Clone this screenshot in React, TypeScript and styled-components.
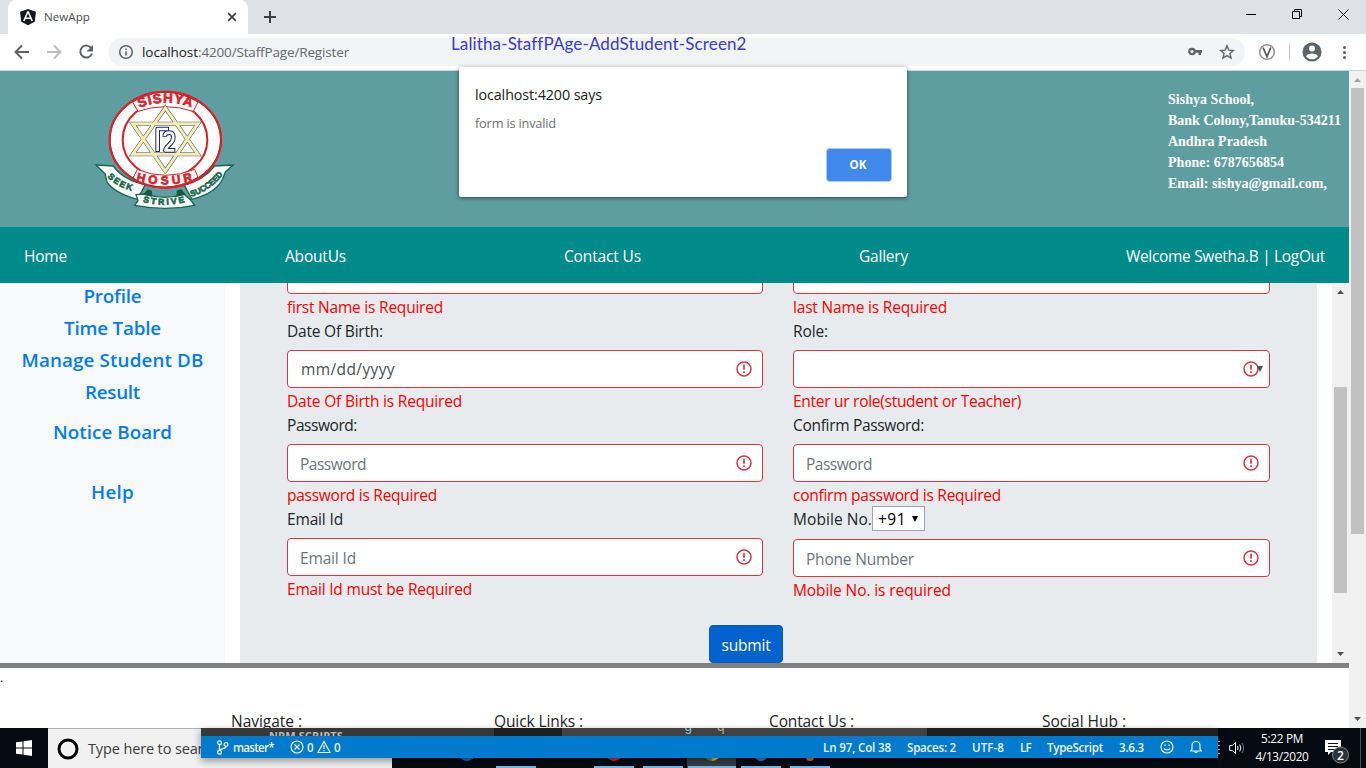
import React, { useLayoutEffect, useRef, useState } from "react";
import styled, { createGlobalStyle, css } from "styled-components";

const ui = `"Open Sans", "Noto Sans", sans-serif`;

const Global = createGlobalStyle`
  *, *::before, *::after { box-sizing: border-box; }
  body { margin: 0; background: #fff; overflow: hidden; font-family: ${ui}; color: #212529; }
`;

/* Text tracked so that it spans a given advance width. */
const Run = styled.span<{ $w: number }>`
  display: inline-block;
  flex: none;
  width: ${(p) => p.$w}px;
  white-space: nowrap;
`;
function Fit({ w, children }: { w: number; children: string }) {
  const inner = useRef<HTMLSpanElement>(null);
  const [spacing, setSpacing] = useState(0);
  useLayoutEffect(() => {
    if (inner.current) {
      setSpacing((w - inner.current.getBoundingClientRect().width) / children.length);
    }
  }, [w, children]);
  return (
    <Run $w={w}>
      <span ref={inner} style={{ letterSpacing: spacing }}>{children}</span>
    </Run>
  );
}

const Screen = styled.div`
  position: relative;
  width: 1366px;
  height: 768px;
  overflow: hidden;
  display: flex;
  flex-direction: column;
`;

/* ---------- browser frame ---------- */
const TabStrip = styled.div`
  height: 34px;
  background: #dee1e6;
  display: flex;
  padding-left: 8px;
  align-items: stretch;
`;
const Tab = styled.div`
  width: 240px;
  background: #fff;
  border-radius: 8px 8px 0 0;
  display: flex;
  align-items: center;
  padding: 0 11px 0 11px;
  font-size: 11.6px;
  color: #4a4d51;
  svg:last-child { margin-left: auto; }
  ${Run} { margin-left: 7px; margin-top: -2px; }
`;
const NewTab = styled.div`
  width: 44px;
  display: flex;
  align-items: center;
  justify-content: center;
`;
const WindowButtons = styled.div`
  margin-left: auto;
  display: flex;
  padding-bottom: 6px;
`;
const WindowButton = styled.div`
  width: 46px;
  display: flex;
  align-items: center;
  justify-content: center;
`;
const Toolbar = styled.div`
  height: 37px;
  background: #fff;
  border-bottom: 1px solid #d0d3d6;
  display: flex;
  align-items: center;
`;
const NavIcons = styled.div`
  width: 108px;
  display: flex;
  gap: 12px;
  padding-left: 12px;
`;
const Omnibox = styled.div`
  width: 1137px;
  height: 28px;
  border-radius: 14px;
  background: #f1f3f4;
  display: flex;
  align-items: center;
  padding: 0 10px;
  font-size: 13.5px;
  color: #66696d;
`;
const UrlHost = styled.span`
  color: #202124;
  margin-left: 8px;
`;
const BoxActions = styled.div`
  margin-left: auto;
  display: flex;
  align-items: center;
  gap: 16px;
`;
const Extensions = styled.div`
  flex: 1;
  display: flex;
  align-items: center;
  padding-left: 13px;
`;
const Divider = styled.i`
  width: 1px;
  height: 16px;
  background: #c4c7ca;
  margin: 0 12px 0 13px;
`;
const Dots = styled.div`
  display: grid;
  gap: 2px;
  margin-left: 21px;
  i { width: 3px; height: 3px; border-radius: 50%; background: #5f6368; }
`;

/* ---------- page ---------- */
const Viewport = styled.div`
  height: 657px;
  display: flex;
`;
const Page = styled.div`
  width: 1349px;
  overflow: hidden;
`;
const Banner = styled.header`
  height: 156px;
  background: #5f9ea0;
  display: flex;
  justify-content: space-between;
  padding: 9px 0 0 80px;
`;
const Address = styled.address`
  width: 181px;
  margin-top: 9px;
  font: bold 14px/21px "Liberation Serif", serif;
  color: #fff;
  display: flex;
  flex-direction: column;
`;
const Menu = styled.nav`
  height: 56px;
  background: #008b8b;
  color: #fff;
  font-size: 15.5px;
  display: flex;
  justify-content: space-between;
  align-items: center;
  padding: 2px 24px 0;
`;
const Body = styled.div`
  height: 385px;
  border-bottom: 5px solid #808080;
  display: flex;
`;
const Sidebar = styled.aside`
  width: 225px;
  background: #f8f9fa;
  display: flex;
  flex-direction: column;
  align-items: center;
  overflow: hidden;
  padding-top: 1px;
`;
const SideLink = styled.a<{ $before?: number }>`
  font-size: 18.8px;
  font-weight: 600;
  line-height: 24px;
  margin-bottom: 8px;
  margin-top: ${(p) => p.$before ?? 0}px;
  color: #007bff;
`;
const FormPanel = styled.form`
  width: 1077px;
  margin: 0 15px;
  background: #e7ebee;
  padding: 0 47px;
  overflow: hidden;
  font-size: 15.5px;
  line-height: 24px;
  display: flex;
  flex-direction: column;
  align-items: center;
`;
const Columns = styled.div`
  width: 983px;
  height: 342px;
  flex: none;
  display: grid;
  grid-template-columns: 476px 477px;
  column-gap: 30px;
  line-height: 26px;
`;
const Column = styled.div`
  margin-top: -27px;
`;
const Label = styled.div`
  display: flex;
  height: 24px;
  margin-bottom: 8px;
`;
const PhoneLabel = styled(Label)`
  height: 25px;
  align-items: center;
`;
const CodeSelect = styled.div`
  width: 53px;
  height: 25px;
  background: #fff;
  border: 1px solid #a6a6a6;
  color: #000;
  display: flex;
  align-items: center;
  justify-content: space-between;
  padding: 0 6px 0 5px;
`;
const Field = styled.div<{ $dark?: boolean }>`
  height: 38px;
  background: #fff;
  border: 1px solid #dc3545;
  border-radius: 4px;
  padding: 1px 10px 0 12px;
  color: ${(p) => (p.$dark ? "#495057" : "#6c757d")};
  display: flex;
  align-items: center;
  ${(p) => p.$dark && css`padding: 0 10px 1px 13px;`}
`;
const Marks = styled.div<{ $arrow?: boolean; $low?: boolean }>`
  margin-left: auto;
  margin-top: ${(p) => (p.$low ? 0 : -2)}px;
  display: flex;
  align-items: center;
  ${(p) => p.$arrow && css`margin-right: -4px;`}
  svg + svg { margin-left: -2px; }
`;
const ErrorText = styled.div`
  height: 24px;
  color: #f00;
`;
const Submit = styled.div`
  width: 74px;
  height: 38px;
  flex: none;
  border-radius: 4px;
  background: #0062cc;
  border: 1px solid #005cbf;
  margin-right: 65px;
  padding-top: 1px;
  color: #fff;
  display: flex;
  align-items: center;
  justify-content: center;
`;
const Footer = styled.footer`
  height: 60px;
  padding: 40px 0 0 231px;
  display: grid;
  grid-template-columns: 263px 275px 273px auto;
  font-size: 15.5px;
  line-height: 26px;
  position: relative;
  overflow: hidden;
`;
const Stop = styled.span`
  position: absolute;
  left: 0;
  top: -3px;
  font-size: 12px;
`;

/* ---------- scrollbars ---------- */
const Track = styled.div`
  width: 17px;
  flex: none;
  background: #f1f1f1;
  display: flex;
  flex-direction: column;
  align-items: center;
  justify-content: space-between;
  padding: 7px 0 7px 0;
`;
const Thumb = styled.div<{ $top: number; $h: number }>`
  width: 13px;
  height: ${(p) => p.$h}px;
  margin: ${(p) => p.$top}px 0 auto;
  background: #c1c1c1;
`;
const Tri = ({ down, color = "#505050" }: { down?: boolean; color?: string }) => (
  <svg width="7" height="4" viewBox="0 0 7 4">
    <path d={down ? "M0 0h7L3.5 4z" : "M0 4h7L3.5 0z"} fill={color} />
  </svg>
);

/* ---------- overlays ---------- */
const Caption = styled.div`
  position: absolute;
  left: 451px;
  top: 33px;
  font: 17px/22px Lato, sans-serif;
  color: #3a3bd3;
`;
const Dialog = styled.div`
  position: absolute;
  left: 459px;
  top: 67px;
  width: 448px;
  height: 130px;
  background: #fff;
  border-radius: 2px;
  box-shadow: 0 1px 4px rgba(0, 0, 0, 0.55);
  padding: 17px 16px;
  display: flex;
  flex-direction: column;
`;
const DialogTitle = styled.div`
  font-size: 14.3px;
  line-height: 22px;
  color: #202124;
`;
const DialogText = styled.div`
  margin-top: 8px;
  font-size: 12.8px;
  line-height: 19px;
  color: #6e7074;
`;
const OkButton = styled.div`
  margin: auto 0 -1px auto;
  width: 64px;
  height: 32px;
  border-radius: 3px;
  background: #4088ec;
  box-shadow: 0 0 0 1px #a9cbf8;
  color: #fff;
  font-size: 11.5px;
  font-weight: 700;
  display: flex;
  align-items: center;
  justify-content: center;
  padding: 0 2px 1px 0;
`;

/* ---------- desktop taskbar ---------- */
const Taskbar = styled.div`
  position: relative;
  height: 40px;
  background: #060a12;
  display: flex;
  color: #fff;
`;
const Start = styled.div`
  width: 48px;
  display: flex;
  align-items: center;
  justify-content: center;
`;
const Search = styled.div`
  width: 344px;
  background: #f1f1f1;
  border-top: 1px solid #b0b0b0;
  display: flex;
  align-items: center;
  padding-left: 9px;
  font-size: 14.5px;
  color: #3c3c3c;
  ${Run} { margin-left: 9px; }
`;
const Apps = styled.div`
  display: flex;
  padding-left: 50px;
`;
const TaskApp = styled.div<{ $active?: boolean; $idle?: boolean }>`
  width: 49px;
  display: flex;
  flex-direction: column;
  align-items: center;
  justify-content: flex-end;
  background: ${(p) => (p.$active ? "#3a3e46" : "transparent")};
  border-bottom: 2px solid transparent;
  &::after {
    content: "";
    width: ${(p) => (p.$active ? 48 : 40)}px;
    height: 2px;
    margin-bottom: -2px;
    background: ${(p) => (p.$idle ? "transparent" : "#76b9ed")};
  }
`;
const Glyph = styled.i<{ $c: string; $s: number }>`
  width: ${(p) => p.$s}px;
  height: ${(p) => p.$s}px;
  margin-bottom: 5px;
  border-radius: 50%;
  background: ${(p) => p.$c};
`;
const Tray = styled.div`
  margin-left: auto;
  width: 148px;
  display: flex;
  align-items: center;
`;
const TrayDots = styled.i`
  width: 2px;
  height: 14px;
  margin-right: 9px;
  background: repeating-linear-gradient(#c8c8c8 0 1px, transparent 1px 4px);
`;
const Clock = styled.div`
  width: 74px;
  display: flex;
  flex-direction: column;
  align-items: center;
  font-size: 11.8px;
  line-height: 18px;
  margin-top: -2px;
`;
const Notices = styled.div`
  width: 27px;
  height: 28px;
  margin: 7px 0 0 5px;
`;
const Peek = styled.i`
  width: 1px;
  height: 40px;
  background: #4d5056;
  margin-left: 9px;
`;
const Editor = styled.div`
  position: absolute;
  left: 201px;
  top: 0;
  width: 1017px;
  height: 30px;
  box-shadow: 0 3px 8px rgba(0, 0, 0, 0.4);
`;
const EditorRow = styled.div`
  height: 8px;
  display: flex;
`;
const Pane = styled.div<{ $w: number; $c: string; $pad?: number }>`
  width: ${(p) => p.$w}px;
  height: 8px;
  overflow: hidden;
  background: ${(p) => p.$c};
  padding-left: ${(p) => p.$pad ?? 0}px;
  font-size: 11px;
  font-weight: 700;
  line-height: 0;
  color: #b8b8b8;
`;
const ScriptsPane = styled(Pane)`
  line-height: 16px;
  ${Run} { margin-top: -11px; }
`;
const CodePane = styled(Pane)`
  display: flex;
  font: 14px/0 "Liberation Mono", monospace;
  color: #86b9c9;
  span { margin-top: -1px; }
  span + span { margin-left: 24px; color: #c0a080; }
`;
const Status = styled.div`
  height: 22px;
  background: #007acc;
  display: flex;
  align-items: center;
  padding: 0 16px 0 15px;
  font-size: 11.6px;
  font-weight: 600;
  color: #e8f4fc;
`;
const Left = styled.div`
  display: flex;
  align-items: center;
  margin-right: auto;
`;
const Gap = styled.i<{ $w: number }>`
  width: ${(p) => p.$w}px;
`;
const Right = styled.div`
  display: flex;
  align-items: center;
  gap: 16px;
`;

const Alert = () => (
  <svg width="16" height="16" viewBox="0 0 16 16" fill="none" stroke="#dc3545">
    <circle cx="8" cy="8" r="7" strokeWidth="1.5" />
    <path d="M8 3.8v5" strokeWidth="1.7" />
    <path d="M8 10.3v1.8" strokeWidth="1.7" />
  </svg>
);

const Crest = () => (
  <svg width="170" height="140" viewBox="0 0 510 420">
    <defs>
      <path id="top" d="M178 84 Q256 52 340 84" />
      <path id="bottom" d="M168 302 Q256 326 346 300" />
      <path id="seek" d="M82 291 Q112 322 162 334" />
      <path id="strive" d="M188 366 Q252 384 320 365" />
      <path id="succeed" d="M334 350 Q392 332 432 280" />
    </defs>
    <g fill="#fff" stroke="#17694c" strokeWidth="4">
      <path d="M48 255 L100 258 Q130 300 196 314 L172 358 Q100 338 80 304 L76 282 Z" />
      <path d="M460 255 L404 258 Q370 302 312 314 L336 358 Q410 338 428 296 L436 276 Z" />
      <path d="M196 342 Q256 362 312 342 L332 360 L344 376 Q256 394 164 376 L174 362 L168 344 Z" />
    </g>
    <path d="M204 328 l12 4 v18 l-28 -6z M304 328 l-14 4 v18 l28 -6z" fill="#17593f" />
    <ellipse cx="256" cy="179" rx="167" ry="144" fill="#fff" stroke="#dc2027" strokeWidth="6" />
    <ellipse cx="255" cy="179" rx="127" ry="114" fill="#fff" stroke="#dc2027" strokeWidth="6" />
    <path d="M158 66 L174 94 Q256 66 340 94 L354 66 Q256 8 158 66Z M172 268 L158 296 Q256 348 354 292 L344 268 Q256 304 172 268Z" fill="#fff" stroke="#dc2027" strokeWidth="3" />
    <ellipse cx="256" cy="179" rx="167" ry="144" fill="none" stroke="#dc2027" strokeWidth="6" />
    <g fill="none" strokeLinejoin="miter">
      <path d="M256 84 L354 223 H158Z M256 273 L354 131 H158Z" stroke="#59597a" strokeWidth="12" />
      <path d="M256 84 L354 223 H158Z M256 273 L354 131 H158Z" stroke="#f3edb2" strokeWidth="9" />
    </g>
    <g fill="none" strokeLinejoin="round">
      <path d="M233 216 V147 H267 M254 170 Q254 158 268 158 Q280 158 280 172 Q280 184 268 194 Q258 202 256 211 H286" stroke="#23237f" strokeWidth="14" />
      <path d="M233 213 V147 H264 M254 168 Q254 158 268 158 Q280 158 280 172 Q280 184 268 194 Q258 202 256 211 H283" stroke="#fff" strokeWidth="8" />
    </g>
    <g fontFamily="Liberation Sans, sans-serif" fontWeight="700">
      <g fill="#dc2027" stroke="#dc2027" strokeWidth="2" fontSize="40">
        <text><textPath href="#top" textLength="160">SISHYA</textPath></text>
        <text fontSize="36"><textPath href="#bottom" textLength="172">HOSUR</textPath></text>
      </g>
      <g fill="#17694c" stroke="#17694c" strokeWidth="2" fontSize="26">
        <text><textPath href="#seek" textLength="84">SEEK</textPath></text>
        <text><textPath href="#strive" textLength="128">STRIVE</textPath></text>
        <text fontSize="25"><textPath href="#succeed" textLength="118" lengthAdjust="spacingAndGlyphs">SUCCEED</textPath></text>
      </g>
    </g>
  </svg>
);

type Entry = {
  label: [string, number];
  hint?: [string, number];
  error: [string, number];
  kind?: "date" | "select" | "phone";
};
const leftFields: Entry[] = [
  { label: ["Date Of Birth:", 96], hint: ["mm/dd/yyyy", 94], error: ["Date Of Birth is Required", 175], kind: "date" },
  { label: ["Password:", 70], hint: ["Password", 66], error: ["password is Required", 150] },
  { label: ["Email Id", 56], hint: ["Email Id", 56], error: ["Email Id must be Required", 185] },
];
const rightFields: Entry[] = [
  { label: ["Role:", 35], error: ["Enter ur role(student or Teacher)", 228], kind: "select" },
  { label: ["Confirm Password:", 131], hint: ["Password", 66], error: ["confirm password is Required", 208] },
  { label: ["Mobile No.", 79], hint: ["Phone Number", 108], error: ["Mobile No. is required", 158], kind: "phone" },
];

const Entries = ({ first, items }: { first: [string, number]; items: Entry[] }) => (
  <Column>
    <Field />
    <ErrorText><Fit w={first[1]}>{first[0]}</Fit></ErrorText>
    {items.map(({ label, hint, error, kind }) => (
      <React.Fragment key={label[0]}>
        {kind === "phone" ? (
          <PhoneLabel>
            <Fit w={label[1]}>{label[0]}</Fit>
            <CodeSelect>
              <Fit w={28}>+91</Fit>
              <svg width="6" height="6" viewBox="0 0 6 6"><path d="M0 0h6L3 6z" /></svg>
            </CodeSelect>
          </PhoneLabel>
        ) : (
          <Label><Fit w={label[1]}>{label[0]}</Fit></Label>
        )}
        <Field $dark={kind === "date"}>
          {hint && <Fit w={hint[1]}>{hint[0]}</Fit>}
          <Marks $arrow={kind === "select"} $low={kind === "date"}>
            <Alert />
            {kind === "select" && (
              <svg width="6" height="6" viewBox="0 0 6 6"><path d="M0 0h6L3 6z" fill="#495057" /></svg>
            )}
          </Marks>
        </Field>
        <ErrorText><Fit w={error[1]}>{error[0]}</Fit></ErrorText>
      </React.Fragment>
    ))}
  </Column>
);

export default function App() {
  return (
    <Screen>
      <Global />
      <TabStrip>
        <Tab>
          <svg width="18" height="18" viewBox="0 0 18 18">
            <path d="M9 1l8 2.7-1.3 10L9 17.3 2.3 13.7 1 3.7z" fill="#151a24" />
            <path d="M9 3.5L4.8 13M9 3.5L13.2 13M6.3 10.2h5.4" fill="none" stroke="#fff" strokeWidth="1.6" />
          </svg>
          <Fit w={46}>NewApp</Fit>
          <svg width="10" height="10" viewBox="0 0 10 10" stroke="#3c4043" strokeWidth="1.7">
            <path d="M1.2 1.2l7.6 7.6M8.8 1.2L1.2 8.8" />
          </svg>
        </Tab>
        <NewTab>
          <svg width="12" height="12" viewBox="0 0 12 12" stroke="#3c4043" strokeWidth="2"><path d="M6 0v12M0 6h12" /></svg>
        </NewTab>
        <WindowButtons>
          <WindowButton><svg width="10" height="10"><path d="M0 5.5h10" stroke="#000" /></svg></WindowButton>
          <WindowButton>
            <svg width="10" height="10" fill="none" stroke="#000"><path d="M.5 2.5h7v7h-7zM2.5 2.5v-2h7v7h-2" /></svg>
          </WindowButton>
          <WindowButton><svg width="11" height="11" stroke="#000"><path d="M.5.5l10 10M10.5.5l-10 10" /></svg></WindowButton>
        </WindowButtons>
      </TabStrip>
      <Toolbar>
        <NavIcons>
          <svg width="20" height="20" viewBox="0 0 20 20" fill="none" stroke="#5f6368" strokeWidth="2"><path d="M17 10H4M10 3.5L3.5 10l6.5 6.5" /></svg>
          <svg width="20" height="20" viewBox="0 0 20 20" fill="none" stroke="#babcbe" strokeWidth="2"><path d="M3 10h13M10 3.5l6.5 6.5-6.5 6.5" /></svg>
          <svg width="20" height="20" viewBox="0 0 20 20" fill="none" stroke="#5f6368" strokeWidth="2">
            <path d="M15.4 6.4A6 6 0 1 0 16 11.5" />
            <path d="M17 3v6.5h-6.5z" fill="#5f6368" stroke="none" />
          </svg>
        </NavIcons>
        <Omnibox>
          <svg width="16" height="16" viewBox="0 0 16 16" fill="none" stroke="#5f6368" strokeWidth="1.5">
            <circle cx="8" cy="8" r="6.3" /><path d="M8 7.2v4.3M8 4.5v1.5" />
          </svg>
          <UrlHost><Fit w={56}>localhost</Fit></UrlHost>
          <Fit w={151}>:4200/StaffPage/Register</Fit>
          <BoxActions>
            <svg width="16" height="16" viewBox="0 0 16 16">
              <circle cx="5" cy="7.5" r="2.7" fill="none" stroke="#5f6368" strokeWidth="2.3" />
              <path d="M7.5 6.1H15v2.6h-1v2.4h-2.5V8.7h-4z" fill="#5f6368" />
            </svg>
            <svg width="16" height="16" viewBox="0 0 16 16" fill="none" stroke="#5f6368" strokeWidth="1.4">
              <path d="M8 1.8l1.8 4.3 4.6.4-3.5 3 1.1 4.5L8 11.6 4 14l1.1-4.5-3.5-3 4.6-.4z" />
            </svg>
          </BoxActions>
        </Omnibox>
        <Extensions>
          <svg width="18" height="18" viewBox="0 0 18 18" fill="none">
            <circle cx="9" cy="9" r="7.3" stroke="#929292" strokeWidth="1.5" />
            <path d="M5 4.5L9 13.5l3.8-9" stroke="#555" strokeWidth="1.7" />
          </svg>
          <Divider />
          <svg width="20" height="20" viewBox="0 0 20 20">
            <circle cx="10" cy="10" r="9.5" fill="#5f6368" />
            <circle cx="10" cy="6.5" r="3" fill="#fff" />
            <path d="M4 14.5c1-4 11-4 12 0a8 8 0 0 1-12 0z" fill="#fff" />
          </svg>
          <Dots><i /><i /><i /></Dots>
        </Extensions>
      </Toolbar>

      <Viewport>
        <Page>
          <Banner>
            <Crest />
            <Address>
              <Fit w={86}>Sishya School,</Fit>
              <Fit w={173}>Bank Colony,Tanuku-534211</Fit>
              <Fit w={99}>Andhra Pradesh</Fit>
              <Fit w={116}>Phone: 6787656854</Fit>
              <Fit w={159}>Email: sishya@gmail.com,</Fit>
            </Address>
          </Banner>
          <Menu>
            <Fit w={43}>Home</Fit>
            <Fit w={61}>AboutUs</Fit>
            <Fit w={77}>Contact Us</Fit>
            <Fit w={49}>Gallery</Fit>
            <Fit w={199}>Welcome Swetha.B | LogOut</Fit>
          </Menu>
          <Body>
            <Sidebar>
              <SideLink><Fit w={58}>Profile</Fit></SideLink>
              <SideLink><Fit w={97}>Time Table</Fit></SideLink>
              <SideLink><Fit w={182}>Manage Student DB</Fit></SideLink>
              <SideLink><Fit w={55}>Result</Fit></SideLink>
              <SideLink $before={8}><Fit w={119}>Notice Board</Fit></SideLink>
              <SideLink $before={28}><Fit w={43}>Help</Fit></SideLink>
            </Sidebar>
            <FormPanel>
              <Columns>
                <Entries first={["first Name is Required", 156]} items={leftFields} />
                <Entries first={["last Name is Required", 154]} items={rightFields} />
              </Columns>
              <Submit><Fit w={49}>submit</Fit></Submit>
            </FormPanel>
            <Track>
              <Tri />
              <Thumb $top={93} $h={206} />
              <Tri down />
            </Track>
          </Body>
          <Footer>
            <Stop>.</Stop>
            <Fit w={71}>Navigate :</Fit>
            <Fit w={89}>Quick Links :</Fit>
            <Fit w={85}>Contact Us :</Fit>
            <Fit w={84}>Social Hub :</Fit>
          </Footer>
        </Page>
        <Track>
          <Tri color="#a3a3a3" />
          <Thumb $top={6} $h={446} />
          <Tri down />
        </Track>
      </Viewport>

      <Taskbar>
        <Start>
          <svg width="16" height="16" viewBox="0 0 16 16" fill="#fff">
            <path d="M0 2.3L6.5 1.4V7.5H0zM7.5 1.2L16 0v7.5H7.5zM0 8.5h6.5v6.1L0 13.7zM7.5 8.5H16V16l-8.5-1.2z" />
          </svg>
        </Start>
        <Search>
          <svg width="22" height="22"><circle cx="11" cy="11" r="9" fill="none" stroke="#000" strokeWidth="3" /></svg>
          <Fit w={131}>Type here to search</Fit>
        </Search>
        <Apps>
          <TaskApp $idle><Glyph $c="#1b6db5" $s={18} /></TaskApp>
          <TaskApp />
          <TaskApp $idle />
          <TaskApp><Glyph $c="linear-gradient(90deg,#4a4fb0 20%,#e02040 40%)" $s={18} /></TaskApp>
          <TaskApp />
          <TaskApp $active><Glyph $c="linear-gradient(90deg,#3a9b4c 45%,#e8c53a 55%)" $s={18} /></TaskApp>
          <TaskApp><Glyph $c="#2b86cf" $s={14} /></TaskApp>
          <TaskApp><Glyph $c="#c77c28" $s={8} /></TaskApp>
        </Apps>
        <Tray>
          <TrayDots />
          <svg width="16" height="16" viewBox="0 0 16 16" fill="none" stroke="#fff">
            <path d="M.7 5.5h2.6L6.5 2.5v11L3.3 10.5H.7z" />
            <path d="M8.5 6q1.2 2 0 4M10.7 4.5q2.2 3.5 0 7" />
            <path d="M13 3q3.2 5 0 10" stroke="#777" />
          </svg>
          <Clock>
            <Fit w={42}>5:22 PM</Fit>
            <Fit w={53}>4/13/2020</Fit>
          </Clock>
          <Notices>
            <svg width="27" height="28" viewBox="0 0 27 28">
              <path d="M1 2h16v12H7l-3 3v-3H1z" fill="#fff" />
              <path d="M4 5.5h10M4 8.5h10M4 11.5h7" stroke="#111" />
              <circle cx="16.5" cy="17" r="8" fill="#2e3138" stroke="#80838a" />
              <text x="16.5" y="21.5" textAnchor="middle" fontSize="12" fontWeight="600" fill="#fff" fontFamily="Open Sans, sans-serif">2</text>
            </svg>
          </Notices>
          <Peek />
        </Tray>
        <Editor>
          <EditorRow>
            <ScriptsPane $w={293} $c="#383838" $pad={68}><Fit w={74}>NPM SCRIPTS</Fit></ScriptsPane>
            <Pane $w={68} $c="#1e1e1e" />
            <CodePane $w={365} $c="#424242" $pad={122}><span>g</span><span>q</span></CodePane>
            <Pane $w={291} $c="#1e1e1e" />
          </EditorRow>
          <Status>
            <Left>
              <svg width="13" height="15" viewBox="0 0 13 15" fill="none" stroke="#e8f4fc" strokeWidth="1.3">
                <circle cx="3.5" cy="2.7" r="1.9" /><circle cx="10" cy="4.5" r="1.9" /><circle cx="3.5" cy="12.3" r="1.9" />
                <path d="M3.5 4.6v5.8M10 6.4C10 9 4.5 8 3.5 10.4" />
              </svg>
              <Gap $w={4} />
              <Fit w={41}>master*</Fit>
              <Gap $w={16} />
              <svg width="14" height="14" viewBox="0 0 14 14" fill="none" stroke="#e8f4fc" strokeWidth="1.2">
                <circle cx="7" cy="7" r="6" /><path d="M4.5 4.5l5 5M9.5 4.5l-5 5" />
              </svg>
              <Gap $w={3} />
              <Fit w={8}>0</Fit>
              <Gap $w={2} />
              <svg width="14" height="14" viewBox="0 0 14 14" fill="none" stroke="#e8f4fc" strokeWidth="1.2">
                <path d="M7 1.5L13 12.5H1zM7 5v4M7 10v1.3" />
              </svg>
              <Gap $w={3} />
              <Fit w={8}>0</Fit>
            </Left>
            <Right>
              <Fit w={68}>Ln 97, Col 38</Fit>
              <Fit w={49}>Spaces: 2</Fit>
              <Fit w={32}>UTF-8</Fit>
              <Fit w={11}>LF</Fit>
              <Fit w={56}>TypeScript</Fit>
              <Fit w={25}>3.6.3</Fit>
              <svg width="14" height="14" viewBox="0 0 14 14" fill="none" stroke="#e8f4fc" strokeWidth="1.2">
                <circle cx="7" cy="7" r="6" /><path d="M4 8.3q3 3.4 6 0M5 4.5v1.5M9 4.5v1.5" />
              </svg>
              <svg width="12" height="14" viewBox="0 0 12 14" fill="none" stroke="#e8f4fc" strokeWidth="1.2">
                <path d="M2 9V5.5a4 4 0 0 1 8 0V9l1.3 2H.7zM4.5 11.5q1.5 2.4 3 0" />
              </svg>
            </Right>
          </Status>
        </Editor>
      </Taskbar>

      <Caption><Fit w={295}>Lalitha-StaffPAge-AddStudent-Screen2</Fit></Caption>
      <Dialog>
        <DialogTitle><Fit w={127}>localhost:4200 says</Fit></DialogTitle>
        <DialogText><Fit w={81}>form is invalid</Fit></DialogText>
        <OkButton><Fit w={17}>OK</Fit></OkButton>
      </Dialog>
    </Screen>
  );
}
